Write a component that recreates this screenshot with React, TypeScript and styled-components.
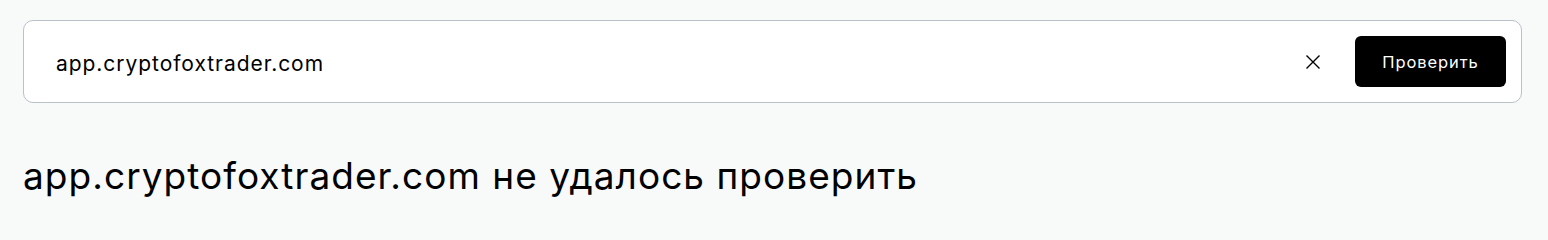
import React, { useState } from "react";
import styled, { createGlobalStyle } from "styled-components";

const GlobalStyle = createGlobalStyle`
  html, body {
    margin: 0;
    padding: 0;
    background: #f8f9f9;
    font-family: Inter, "Noto Sans", sans-serif;
    color: #000;
  }
`;

const Page = styled.div`
  display: flex;
  flex-direction: column;
  padding: 20px 26px 0 23px;
`;

const SearchBar = styled.form`
  display: flex;
  align-items: center;
  height: 83px;
  box-sizing: border-box;
  padding: 0 15px 0 32px;
  background: #fff;
  border: 1px solid #b9c1c9;
  border-radius: 10px;
`;

const Input = styled.input`
  flex: 1;
  min-width: 0;
  border: none;
  outline: none;
  background: transparent;
  font-family: inherit;
  font-size: 21px;
  letter-spacing: 0.95px;
  color: #000;
  padding: 3px 0 0;
`;

const ClearButton = styled.button`
  display: flex;
  align-items: center;
  justify-content: center;
  width: 32px;
  height: 32px;
  margin-right: 26px;
  padding: 0;
  border: none;
  background: transparent;
  cursor: pointer;
`;

const SubmitButton = styled.button`
  height: 51px;
  width: 151px;
  border: none;
  border-radius: 6px;
  background: #000;
  color: #fff;
  font-family: inherit;
  font-size: 16.5px;
  letter-spacing: 0.9px;
  cursor: pointer;
`;

const Title = styled.h1`
  margin: 49px 0 0;
  font-size: 37px;
  font-weight: 400;
  letter-spacing: 1.05px;
  line-height: 48px;
`;

export default function App() {
  const [value, setValue] = useState("app.cryptofoxtrader.com");

  return (
    <>
      <GlobalStyle />
      <Page>
        <SearchBar onSubmit={(e) => e.preventDefault()}>
          <Input value={value} onChange={(e) => setValue(e.target.value)} />
          <ClearButton type="button" onClick={() => setValue("")}>
            <svg width="16" height="16" viewBox="0 0 16 16" fill="none">
              <path
                d="M1.5 1.5l13 13M14.5 1.5l-13 13"
                stroke="#000"
                strokeWidth="1.4"
              />
            </svg>
          </ClearButton>
          <SubmitButton type="submit">Проверить</SubmitButton>
        </SearchBar>
        <Title>app.cryptofoxtrader.com не удалось проверить</Title>
      </Page>
    </>
  );
}
